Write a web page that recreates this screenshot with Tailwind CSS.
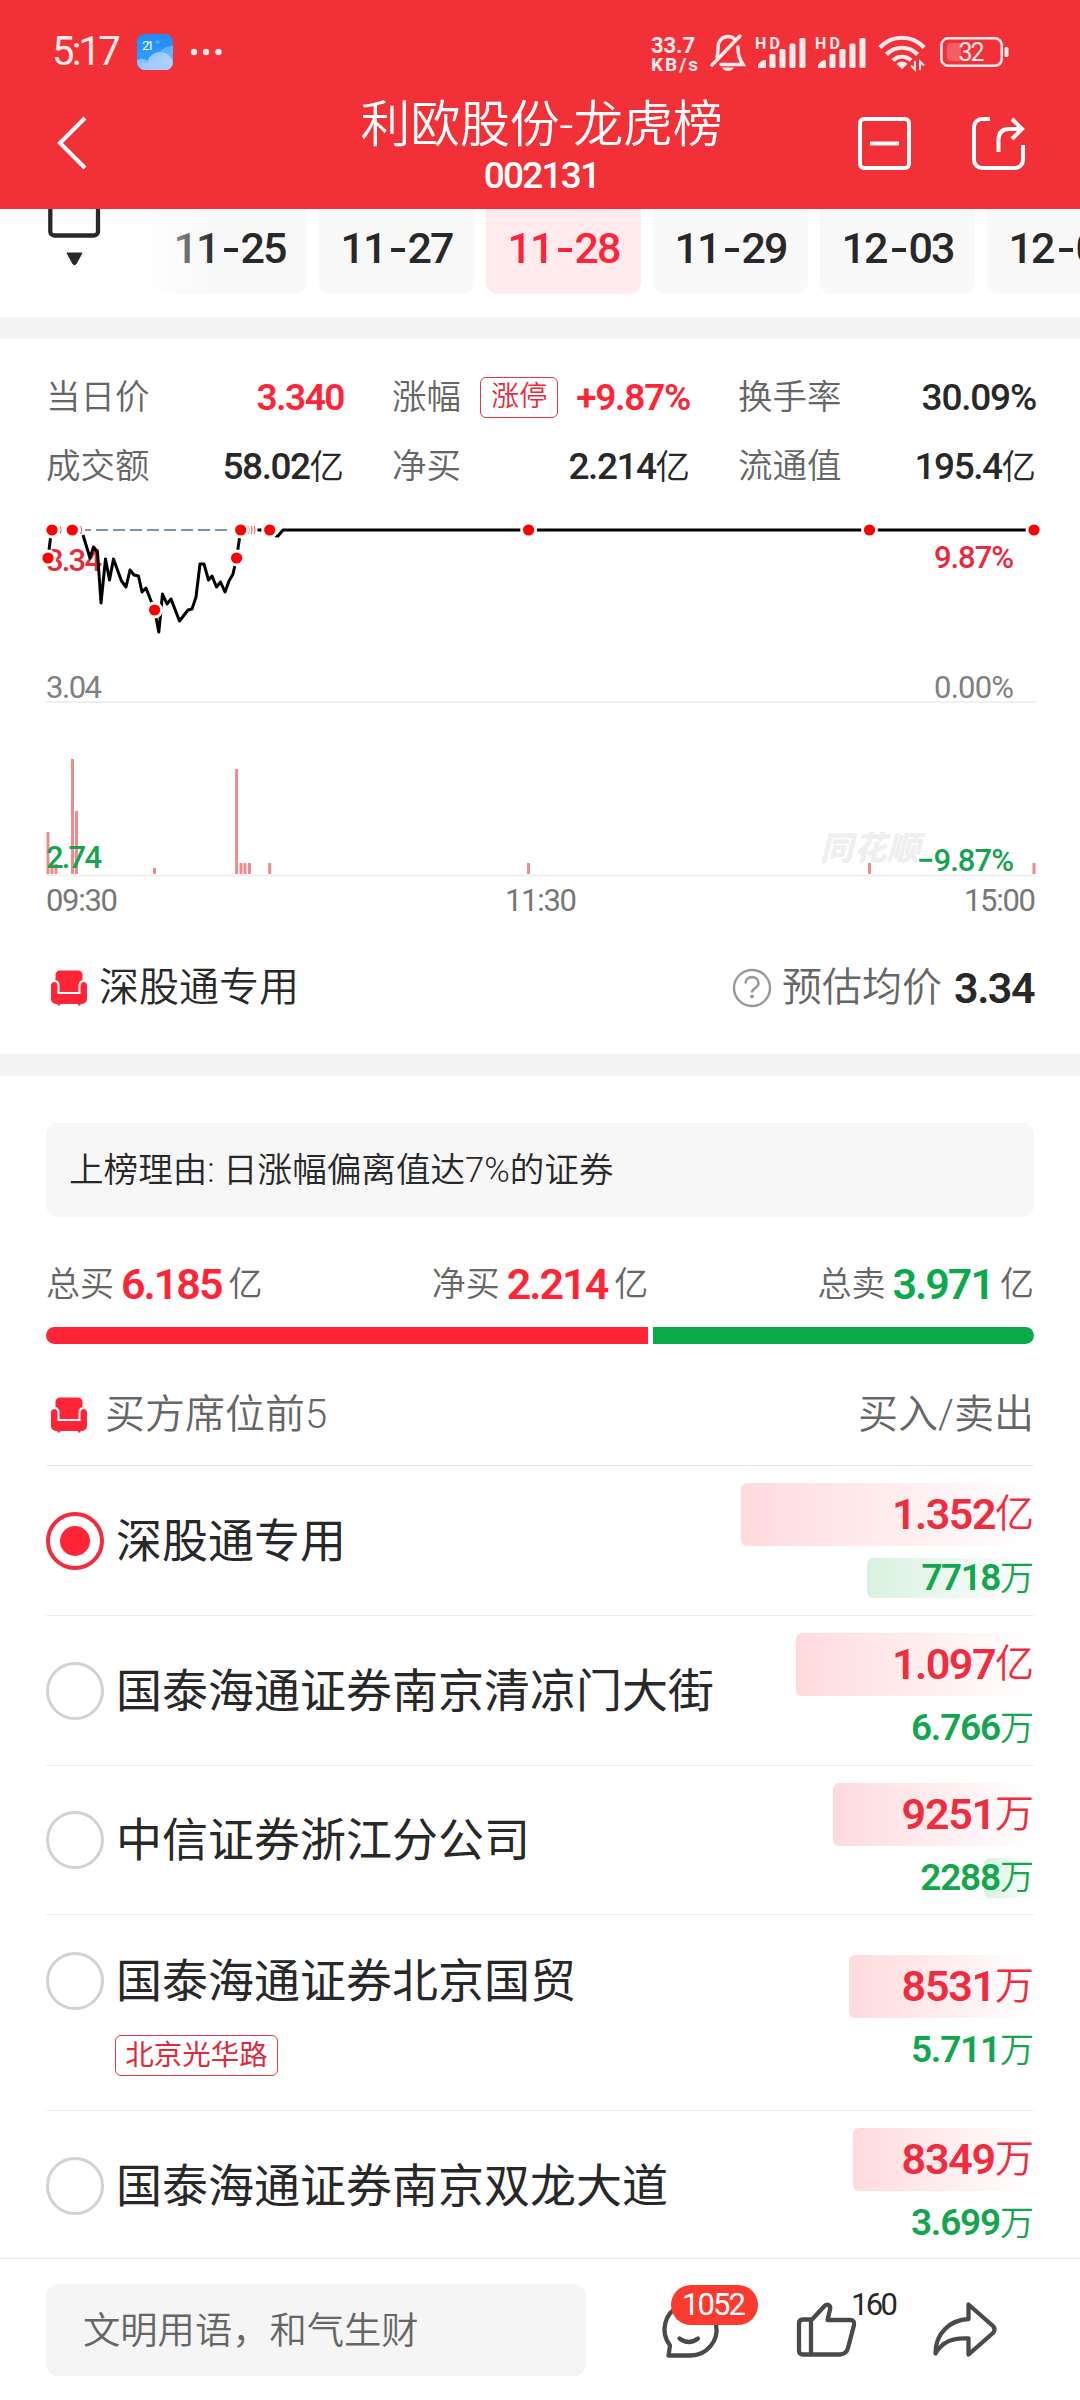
<!DOCTYPE html>
<html lang="zh-CN">
<head>
    <meta charset="UTF-8">
    <meta name="viewport" content="width=device-width, initial-scale=1.0">
    <title>利欧股份-龙虎榜</title>
    <script src="https://cdn.jsdelivr.net/npm/@tailwindcss/browser@4"></script>
</head>
<body class="bg-white w-[1080px] h-[2400px] overflow-hidden flex flex-col font-['Roboto','Noto_Sans_CJK_SC',sans-serif] text-[#282828]">

    <!-- sofa icon, used twice -->
    <svg class="hidden">
        <symbol id="sofa" viewBox="0 0 36 36">
            <path d="M9 0.500h18a4.500 4.500 0 0 1 4.500 4.500v5c-3 .8-4 3-4 5.500v6.500h-19v-6.500c0-2.500-1-4.700-4-5.500v-5a4.500 4.500 0 0 1 4.500-4.500z"/>
            <path d="M0 15.500c0-4.800 6.500-4.800 6.500 0v8.500h23v-8.500c0-4.800 6.500-4.800 6.500 0v13.500a5 5 0 0 1-5 5h-1.500v1.500h-2.500v-1.500h-18v1.500h-2.500v-1.500h-1.500a5 5 0 0 1-5-5z"/>
        </symbol>
    </svg>

    <!-- Header -->
    <header class="bg-[#f23037] h-[209px] shrink-0 text-white">
        <div class="h-[96px] pt-2 pl-[52px] flex items-center text-white/90">
            <span class="text-[40px] leading-none w-[85px] tracking-[-2.800px]">5:17</span>
            <svg class="w-9 h-9" viewBox="0 0 36 36">
                <defs>
                    <linearGradient id="sky" x1="0" y1="0" x2="0" y2="1"><stop offset="0" stop-color="#1f8bfb"/><stop offset="1" stop-color="#35a5ff"/></linearGradient>
                    <linearGradient id="cloud" x1="0" y1="0" x2="1" y2="1"><stop offset="0" stop-color="#8cc4ff"/><stop offset="1" stop-color="#c5dcff"/></linearGradient>
                    <clipPath id="wc"><rect width="36" height="36" rx="8"/></clipPath>
                </defs>
                <g clip-path="url(#wc)">
                    <rect width="36" height="36" fill="url(#sky)"/>
                    <path d="M22 20c3-6 9-8 14-8v24h-16z" fill="#5fb2ff"/>
                    <circle cx="23" cy="31" r="13" fill="url(#cloud)"/>
                    <circle cx="5" cy="34" r="9" fill="#86c1ff"/>
                    <rect x="4" y="29" width="32" height="8" fill="#a3cfff" opacity=".7"/>
                </g>
                <text x="5" y="16" font-size="13" fill="#fff" textLength="12">21</text>
                <circle cx="20.500" cy="8" r="1.300" fill="none" stroke="#7fd0ff" stroke-width=".7"/>
            </svg>
            <svg class="w-8 h-2 ml-[17px]" viewBox="0 0 32 8" fill="currentColor"><circle cx="4" cy="4" r="3.200"/><circle cx="16" cy="4" r="3.200"/><circle cx="28.500" cy="4" r="3.200"/></svg>

            <svg class="w-[370px] h-[48px] ml-auto mr-[62px]" viewBox="648 28 370 48" fill="currentColor">
                <g font-weight="700">
                    <text x="651" y="52.500" font-size="22" textLength="44">33.7</text>
                    <text x="651" y="70.500" font-size="19" textLength="47">KB/s</text>
                    <text x="755" y="48.500" font-size="16" textLength="25">HD</text>
                    <text x="815" y="48.500" font-size="16" textLength="25">HD</text>
                </g>
                <!-- muted bell -->
                <g fill="none" stroke="currentColor" stroke-width="3.400" stroke-linecap="round">
                    <path d="M712 65L740 36"/>
                    <path d="M717 57c1-3 1-6 1-9c0-7 4-11.500 10-11.500c3 0 5 1 6.500 2.500"/>
                    <path d="M738 47c0 8 1 11 5 17.500h-22"/>
                </g>
                <path d="M722 67.500h12c-2 4.500-10 4.500-12 0z"/>
                <g id="bars">
                    <path d="M758 68v-3q3-5 8-5v8z"/>
                    <rect x="769.500" y="54" width="6" height="14" rx="1.500"/><rect x="779.500" y="49" width="6" height="19" rx="1.500"/>
                    <rect x="789.500" y="43.500" width="6" height="24.500" rx="1.500"/><rect x="799.500" y="38" width="6" height="30" rx="1.500"/>
                </g>
                <use href="#bars" x="60"/>
                <!-- wifi -->
                <g fill="none" stroke="currentColor" stroke-width="4.200">
                    <path d="M880 47.500c12-13 32-13 44 0"/>
                    <path d="M886.500 54.500c8.500-9 22.500-9 31 0"/>
                    <path d="M893 60.500c5-5 13-5 18 0"/>
                </g>
                <path d="M902 69l-5.500-5c3-3.300 8-3.300 11 0z"/>
                <path d="M915 61v8.500l-4-4M920 70v-8.500l4 4" fill="none" stroke="currentColor" stroke-width="2"/>
                <!-- battery -->
                <rect x="941.300" y="38.300" width="60.500" height="27.500" rx="7" fill="none" stroke="currentColor" stroke-width="2.600"/>
                <path d="M951 43h10v18h-10a4 4 0 0 1-4-4v-10a4 4 0 0 1 4-4z" opacity=".25"/>
                <rect x="1004.500" y="47" width="4" height="10" rx="1.500"/>
                <text x="958.500" y="61" font-size="25" textLength="26">32</text>
            </svg>
        </div>
        <div class="h-[94px] pl-[56px] pr-[55px] flex items-center justify-between">
            <svg class="w-[32px] h-[54px]" viewBox="0 0 32 54" fill="none" stroke="white" stroke-width="4"><path d="M29 2L4 27L29 52"/></svg>
            <div class="flex flex-col items-center w-[400px] ml-[138px] pt-3">
                <h1 class="text-[50px] leading-[54px] font-[350] whitespace-nowrap tracking-[-0.300px]">利欧股份-龙虎榜</h1>
                <p class="text-[37px] leading-[48px] font-medium tracking-[-1.800px]">002131</p>
            </div>
            <div class="flex gap-[60px]">
                <svg class="w-[54px] h-[54px]" viewBox="0 0 54 54" fill="none" stroke="white" stroke-width="4"><rect x="3" y="3" width="49" height="49" rx="4"/><path d="M13 27.500h29"/></svg>
                <svg class="w-[54px] h-[54px]" viewBox="0 0 54 54" fill="none" stroke="white" stroke-width="4"><path d="M19 3h-8a8 8 0 0 0-8 8v33a8 8 0 0 0 8 8h33a8 8 0 0 0 8-8v-15"/><path d="M27.500 36v-12c0-8 4-11 11-11h12M41 3l10 10l-10 10"/></svg>
            </div>
        </div>
    </header>

    <!-- Date tabs -->
    <nav class="relative h-[108px] shrink-0 overflow-hidden pl-[152px]">
        <div class="flex gap-3 text-[43px] font-medium tracking-[-2px] leading-none">
            <div class="w-[155px] h-[85px] shrink-0 rounded-b-xl bg-[#f9f9f9] flex justify-center pt-[18px]">11<span class="inline-block w-[22px] text-center scale-x-125">-</span>25</div>
            <div class="w-[155px] h-[85px] shrink-0 rounded-b-xl bg-[#f9f9f9] flex justify-center pt-[18px]">11<span class="inline-block w-[22px] text-center scale-x-125">-</span>27</div>
            <div class="w-[155px] h-[85px] shrink-0 rounded-b-xl bg-[#ffebed] text-[#ff2436] flex justify-center pt-[18px]">11<span class="inline-block w-[22px] text-center scale-x-125">-</span>28</div>
            <div class="w-[155px] h-[85px] shrink-0 rounded-b-xl bg-[#f9f9f9] flex justify-center pt-[18px]">11<span class="inline-block w-[22px] text-center scale-x-125">-</span>29</div>
            <div class="w-[155px] h-[85px] shrink-0 rounded-b-xl bg-[#f9f9f9] flex justify-center pt-[18px]">12<span class="inline-block w-[22px] text-center scale-x-125">-</span>03</div>
            <div class="w-[155px] h-[85px] shrink-0 rounded-b-xl bg-[#f9f9f9] flex justify-center pt-[18px]">12<span class="inline-block w-[22px] text-center scale-x-125">-</span>04</div>
        </div>
        <div class="absolute left-0 top-0 w-[215px] h-[90px] bg-linear-to-r from-white from-60% to-white/0">
            <svg class="w-[56px] h-[60px] ml-[46px]" viewBox="46 0 56 60"><path d="M50.300-5V22.500a4 4 0 0 0 4 4H94a4 4 0 0 0 4-4V-5" fill="none" stroke="#282828" stroke-width="4.300"/><path d="M67 44h15l-6 11q-1.500 1.500-3 0z" fill="#282828" stroke="#282828" stroke-width="1"/></svg>
        </div>
    </nav>
    <div class="h-[22px] shrink-0 bg-[#f4f4f4]"></div>

    <!-- Quote of the day -->
    <section class="h-[715px] shrink-0 px-[46px] pt-[24px]">
        <div class="w-[990px] grid grid-cols-3 gap-x-12 text-[34.500px] text-[#666]">
            <div class="h-[69px] flex items-center justify-between"><span class="font-[350]">当日价</span><b class="text-[37px] font-semibold tracking-[-1.500px] text-[#ff2436]">3.340</b></div>
            <div class="h-[69px] flex items-center justify-between"><span class="font-[350]">涨幅</span>
                <div class="flex items-center gap-[18px]">
                    <span class="w-[78px] h-[41px] border-[1.500px] border-[#d8384a] rounded-md text-[28px] leading-[37px] text-center font-[350] text-[#e82a3c]">涨停</span>
                    <b class="text-[37px] font-semibold tracking-[-1.300px] text-[#ff2436]">+9.87%</b>
                </div>
            </div>
            <div class="h-[69px] flex items-center justify-between"><span class="font-[350]">换手率</span><span class="text-[37px] font-medium tracking-[-1.200px] text-[#282828]">30.09%</span></div>
            <div class="h-[69px] flex items-center justify-between"><span class="font-[350]">成交额</span><span class="text-[#282828] font-[350]"><span class="text-[37px] font-medium tracking-[-1.500px]">58.02</span>亿</span></div>
            <div class="h-[69px] flex items-center justify-between"><span class="font-[350]">净买</span><span class="text-[#282828] font-[350]"><span class="text-[37px] font-medium tracking-[-1.500px]">2.214</span>亿</span></div>
            <div class="h-[69px] flex items-center justify-between"><span class="font-[350]">流通值</span><span class="text-[#282828] font-[350]"><span class="text-[37px] font-medium tracking-[-1.500px]">195.4</span>亿</span></div>
        </div>

        <!-- Intraday chart -->
        <svg class="block -ml-[6px] -mt-px w-[1002px] h-[420px]" viewBox="40 500 1002 420">
            <g stroke="#f0f0f0" stroke-width="2"><path d="M46 702H1036M46 875.500H1036"/></g>
            <text x="820" y="860" font-size="33" font-weight="900" font-style="italic" fill="#efefef" textLength="100">同花顺</text>
            <g stroke="#f08a91" stroke-width="3">
                <path d="M48 874V832M52 874V864M56 874V864M72.500 874V759M76.500 874V811M154.500 874V868"/>
                <path d="M236.600 874V769M241 874V863M245 874V863M249.500 874V863M269.700 874V863M528.500 874V863M869.500 874V863M1034 874V863"/>
            </g>
            <g font-size="31" font-weight="500">
                <text x="46" y="571" fill="#e82a3c" textLength="56">3.34</text>
                <text x="46" y="698" fill="#808080" font-weight="450" textLength="56">3.04</text>
                <text x="46" y="868" fill="#16a34e" textLength="56">2.74</text>
                <text x="934" y="568" fill="#e82a3c" textLength="80">9.87%</text>
                <text x="934" y="698" fill="#808080" font-weight="450" textLength="80">0.00%</text>
                <text x="917" y="871" fill="#16a34e" textLength="97">−9.87%</text>
                <g fill="#777" font-weight="450">
                    <text x="46" y="911" textLength="72">09:30</text>
                    <text x="505" y="911" textLength="72">11:30</text>
                    <text x="964" y="911" textLength="72">15:00</text>
                </g>
            </g>
            <path d="M85 530H229" stroke="#4a74a8" stroke-width="1.600" stroke-dasharray="12 5" stroke-dashoffset="6"/>
            <g fill="none" stroke="#000" stroke-width="3" stroke-linejoin="round">
                <path d="M48 558L51.500 530M83 535L90 558L93.500 547L97.500 552L101 603L105.500 559L109.500 580L113.500 559L121.500 581L126 587L130 570L134 575L138.500 576L142 592L146 588L154.600 610L158.800 632L162.500 594L167 604L171 599L179.500 621L188 610L192 609L196 597L200 564H204L208.500 580L212 576L216.500 587L220.500 582L225 592L229 581L233 574L236.600 558L240.700 530"/>
                <path d="M257.500 530H269.700L276 536H278L283 530H1034"/>
            </g>
            <path d="M60 526q2 4 0 8M80.500 526q2 4 0 8M248 526q2 4 0 8M251 526q2 4 0 8M254 526q2 4 0 8" fill="none" stroke="#f4626a" stroke-width="1.200"/>
            <g fill="#f00" stroke="#fff" stroke-width="2.800">
                <circle cx="48" cy="558" r="7"/><circle cx="52" cy="530" r="7"/><circle cx="72.300" cy="530" r="7"/><circle cx="154.600" cy="610" r="7"/>
                <circle cx="236.600" cy="558" r="7"/><circle cx="240.700" cy="530" r="7"/><circle cx="269.700" cy="530" r="7"/>
                <circle cx="528.600" cy="530" r="7"/><circle cx="869.500" cy="530" r="7"/><circle cx="1034" cy="530" r="7"/>
            </g>
        </svg>

        <div class="h-[136px] flex items-center text-[40px]">
            <svg class="w-9 h-9 ml-[5px] mr-[12px] fill-[#ff2436]"><use href="#sofa"/></svg>
            <span class="font-[350]">深股通专用</span>
            <svg class="w-[40px] h-[40px] ml-auto mr-[10px]" viewBox="0 0 40 40"><circle cx="20" cy="20" r="18" fill="none" stroke="#999" stroke-width="2.400"/><path d="M13.500 15.500c0-8.500 13-8.500 13 0c0 4.500-6.500 4.500-6.500 9" fill="none" stroke="#999" stroke-width="2.600"/><circle cx="20" cy="28.500" r="1.900" fill="#999"/></svg>
            <span class="font-[350] text-[#666]">预估均价</span>
            <span class="text-[43px] font-semibold tracking-[-1.500px] ml-[12px]">3.34</span>
        </div>
    </section>
    <div class="h-[22px] shrink-0 bg-[#f4f4f4]"></div>

    <!-- Ranking detail -->
    <section class="h-[1182px] shrink-0 px-[46px] pt-[47px]">
        <div class="h-[94px] rounded-xl bg-[#f7f7f7] px-[23px] pt-[2px] flex items-center text-[34.600px] font-[350]">上榜理由: 日涨幅偏离值达7%的证券</div>

        <div class="h-[110px] pt-6 flex items-center justify-between text-[34px] font-[350] text-[#666]">
            <div class="flex items-center gap-[7px]">总买<b class="text-[43px] font-semibold tracking-[-2px] text-[#ff2436]">6.185</b>亿</div>
            <div class="flex items-center gap-[7px]">净买<b class="text-[43px] font-semibold tracking-[-2px] text-[#ff2436]">2.214</b>亿</div>
            <div class="flex items-center gap-[7px]">总卖<b class="text-[43px] font-semibold tracking-[-2px] text-[#0aaa4b]">3.971</b>亿</div>
        </div>
        <div class="flex gap-[5px] h-[17px]">
            <div class="w-[602px] rounded-l-full bg-[#ff2436]"></div>
            <div class="flex-1 rounded-r-full bg-[#0aaa4b]"></div>
        </div>

        <div class="h-[122px] pt-[21px] border-b border-[#e8e8e8] flex items-center text-[40px] font-[350] text-[#666]">
            <svg class="w-9 h-9 ml-[5px] mr-[18px] fill-[#ff2436]"><use href="#sofa"/></svg>
            买方席位前5
            <span class="ml-auto">买入/卖出</span>
        </div>

        <div class="h-[150px] border-b border-[#eee] flex items-center justify-between">
            <div class="flex items-center gap-[12px]">
                <div class="w-[58px] h-[58px] rounded-full border-[4px] border-[#f02c3e] flex items-center justify-center"><div class="w-[30px] h-[30px] rounded-full bg-[#ff2436]"></div></div>
                <span class="text-[46px] leading-none">深股通专用</span>
            </div>
            <div class="flex flex-col items-end gap-3">
                <div class="w-[293px] h-[63px] rounded-l-md bg-linear-to-r from-[#ffdadd] to-white flex items-center justify-end text-[#f02c3e] text-[39px] font-[350]"><b class="text-[43px] font-semibold tracking-[-1.500px]">1.352</b>亿</div>
                <div class="w-[167px] h-[40px] rounded-l-md bg-linear-to-r from-[#d8f2df] to-white flex items-center justify-end text-[#14a64e] text-[34px] font-[350]"><b class="text-[37px] font-semibold tracking-[-1.500px]">7718</b>万</div>
            </div>
        </div>
        <div class="h-[150px] border-b border-[#eee] flex items-center justify-between">
            <div class="flex items-center gap-[12px]">
                <div class="w-[58px] h-[58px] rounded-full border-[3.500px] border-[#d2d2d2]"></div>
                <span class="text-[46px] leading-none">国泰海通证券南京清凉门大街</span>
            </div>
            <div class="flex flex-col items-end gap-3">
                <div class="w-[238px] h-[63px] rounded-l-md bg-linear-to-r from-[#ffdadd] to-white flex items-center justify-end text-[#f02c3e] text-[39px] font-[350]"><b class="text-[43px] font-semibold tracking-[-1.500px]">1.097</b>亿</div>
                <div class="h-[40px] flex items-center justify-end text-[#14a64e] text-[34px] font-[350]"><b class="text-[37px] font-semibold tracking-[-1.200px]">6.766</b>万</div>
            </div>
        </div>
        <div class="h-[149px] border-b border-[#eee] flex items-center justify-between">
            <div class="flex items-center gap-[12px]">
                <div class="w-[58px] h-[58px] rounded-full border-[3.500px] border-[#d2d2d2]"></div>
                <span class="text-[46px] leading-none">中信证券浙江分公司</span>
            </div>
            <div class="flex flex-col items-end gap-3">
                <div class="w-[201px] h-[63px] rounded-l-md bg-linear-to-r from-[#ffdadd] to-white flex items-center justify-end text-[#f02c3e] text-[39px] font-[350]"><b class="text-[43px] font-semibold tracking-[-1.200px]">9251</b>万</div>
                <div class="w-[50px] h-[40px] rounded-l-md bg-linear-to-r from-[#d8f2df] to-white flex items-center justify-end text-[#14a64e] text-[34px] font-[350]"><b class="text-[37px] font-semibold tracking-[-1.200px]">2288</b>万</div>
            </div>
        </div>
        <div class="h-[196px] border-b border-[#eee] flex items-center justify-between">
            <div class="pt-[3px]">
                <div class="flex items-center gap-[12px]">
                    <div class="w-[58px] h-[58px] rounded-full border-[3.500px] border-[#d2d2d2]"></div>
                    <span class="text-[46px] leading-none">国泰海通证券北京国贸</span>
                </div>
                <div class="ml-[69px] mt-[25px] w-[163px] h-[41px] border-[1.500px] border-[#d8384a] rounded-md text-[28.500px] leading-[39px] text-center text-[#e02a3c]">北京光华路</div>
            </div>
            <div class="flex flex-col items-end gap-3">
                <div class="w-[185px] h-[63px] rounded-l-md bg-linear-to-r from-[#ffdadd] to-white flex items-center justify-end text-[#f02c3e] text-[39px] font-[350]"><b class="text-[43px] font-semibold tracking-[-1.200px]">8531</b>万</div>
                <div class="h-[40px] flex items-center justify-end text-[#14a64e] text-[34px] font-[350]"><b class="text-[37px] font-semibold tracking-[-1.200px]">5.711</b>万</div>
            </div>
        </div>
        <div class="h-[149px] flex items-center justify-between">
            <div class="flex items-center gap-[12px]">
                <div class="w-[58px] h-[58px] rounded-full border-[3.500px] border-[#d2d2d2]"></div>
                <span class="text-[46px] leading-none">国泰海通证券南京双龙大道</span>
            </div>
            <div class="flex flex-col items-end gap-3">
                <div class="w-[181px] h-[63px] rounded-l-md bg-linear-to-r from-[#ffdadd] to-white flex items-center justify-end text-[#f02c3e] text-[39px] font-[350]"><b class="text-[43px] font-semibold tracking-[-1.200px]">8349</b>万</div>
                <div class="h-[40px] flex items-center justify-end text-[#14a64e] text-[34px] font-[350]"><b class="text-[37px] font-semibold tracking-[-1.200px]">3.699</b>万</div>
            </div>
        </div>
    </section>

    <!-- Comment bar -->
    <footer class="h-[142px] shrink-0 border-t border-[#e6e6e6] bg-white pl-[46px] pt-[25px] flex">
        <div class="w-[540px] h-[92px] rounded-xl bg-[#f5f5f5] pl-[37px] pt-[4px] flex items-center text-[37.300px] font-[350] text-[#666]">文明用语，和气生财</div>
        <svg class="w-[430px] h-[92px] ml-[43px]" viewBox="630 2284 430 92" fill="none" stroke="#4a4a4a" stroke-width="4.300" stroke-linejoin="round" stroke-linecap="round">
            <path d="M669.500 2355.500h21a26 26 0 1 0-19.500-10z"/>
            <path d="M680.500 2338.500q9.500 7 18.500 0"/>
            <path d="M813 2319.500l12.500-13.500c3-3 6.500-.5 5.500 3.500l-2.500 10.500h22.500q5 0 4 5l-6 23q-1.500 6-8 6.500h-37q-4 0-4-4v-27q0-4 4-4zM812 2320v34"/>
            <path d="M969.500 2304.500l24.500 21.500q3 3.500 0 7l-24.500 21.500v-16c-16-1-26 3-33 15c0-21 15-33.500 33-34.500z"/>
            <rect x="672" y="2285" width="87" height="40" rx="20" fill="#fb3b30" stroke="none"/>
            <text x="683" y="2315" font-size="31" fill="#fff" stroke="none" textLength="64">1052</text>
            <text x="852" y="2315" font-size="31" fill="#282828" stroke="none" textLength="47">160</text>
        </svg>
    </footer>
</body>
</html>
